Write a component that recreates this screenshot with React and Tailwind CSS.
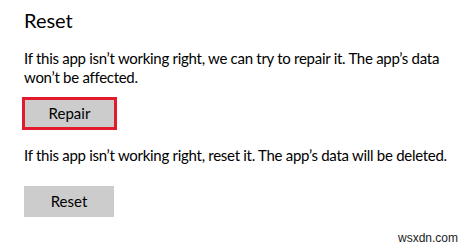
import React from 'react';

const App = () => {
  return (
    <div className="relative w-[469px] h-[247px] bg-white overflow-hidden text-black" style={{ fontFamily: 'Lato, "Noto Sans", sans-serif' }}>
      <div className="pl-6 pt-[6px]">
        <h2 className="text-[20px] leading-[28px] font-normal">Reset</h2>
        <p className="mt-[15px] text-[15px] leading-[19px] tracking-[-0.28px] whitespace-nowrap">
          If this app isn’t working right, we can try to repair it. The app’s data
          <br />
          won’t be affected.
        </p>
        <button className="mt-[10px] -ml-[2px] w-[95px] h-[33px] bg-[#cccccc] border-[3px] border-[#e21b2c] text-[15px] flex items-center justify-center">
          Repair
        </button>
        <p className="mt-[16px] text-[15px] leading-[19px] tracking-[-0.28px] whitespace-nowrap">
          If this app isn’t working right, reset it. The app’s data will be deleted.
        </p>
        <button className="mt-[21px] w-[90px] h-[31px] bg-[#cccccc] text-[15px] flex items-center justify-center">
          Reset
        </button>
      </div>
      <span className="absolute right-[11px] bottom-[1px] text-[12px] text-[#222] leading-[16px]" style={{ fontFamily: '"Liberation Sans", Arial, sans-serif' }}>
        wsxdn.com
      </span>
    </div>
  );
};

export default App;
